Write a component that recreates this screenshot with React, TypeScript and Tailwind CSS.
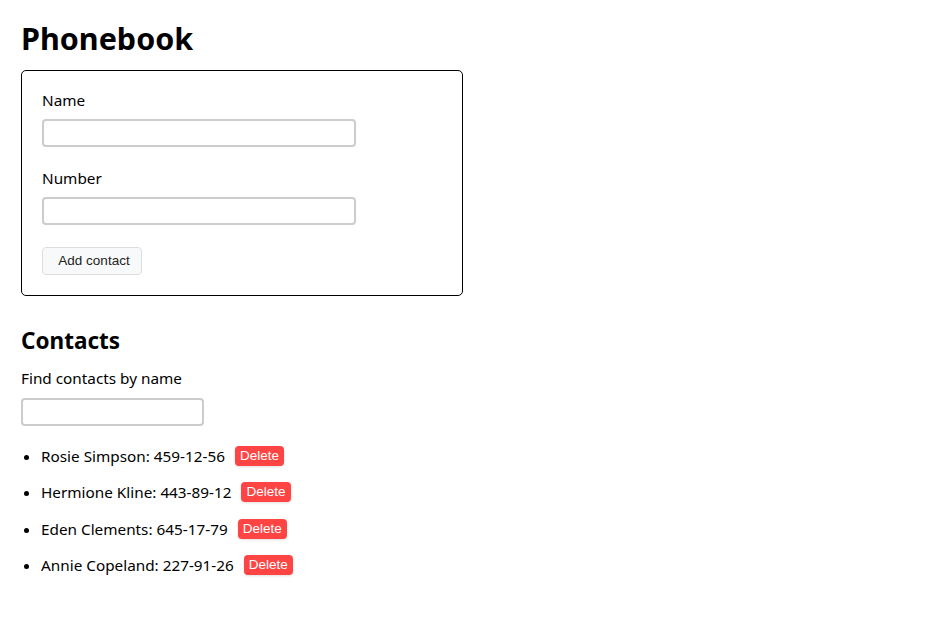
import React, { useState } from "react";

type Contact = { id: string; name: string; number: string };

const initialContacts: Contact[] = [
  { id: "id-1", name: "Rosie Simpson", number: "459-12-56" },
  { id: "id-2", name: "Hermione Kline", number: "443-89-12" },
  { id: "id-3", name: "Eden Clements", number: "645-17-79" },
  { id: "id-4", name: "Annie Copeland", number: "227-91-26" },
];

function App() {
  const [contacts, setContacts] = useState<Contact[]>(initialContacts);
  const [name, setName] = useState("");
  const [number, setNumber] = useState("");
  const [filter, setFilter] = useState("");

  const handleSubmit = (e: React.FormEvent) => {
    e.preventDefault();
    if (!name.trim()) return;
    setContacts((prev) => [...prev, { id: `id-${Date.now()}`, name, number }]);
    setName("");
    setNumber("");
  };

  const visible = contacts.filter((c) =>
    c.name.toLowerCase().includes(filter.toLowerCase())
  );

  return (
    <div className="min-h-screen bg-white px-[21px] pt-[18px] text-black font-['Segoe_UI','Noto_Sans',sans-serif] text-[15.3px]">
      <h1 className="text-[30.5px] font-bold leading-[40px] mb-[12px]">Phonebook</h1>

      {/* form */}
      <form
        onSubmit={handleSubmit}
        className="w-[442px] h-[226px] border border-black rounded-[5px] px-[20px] pt-[18px]"
      >
        <label className="block">
          <span className="block leading-[22px] mb-[8px]">Name</span>
          <input
            value={name}
            onChange={(e) => setName(e.target.value)}
            className="block w-[314px] h-[28px] border-2 border-[#cccccc] rounded-[4px] px-2 outline-none"
          />
        </label>
        <label className="block mt-[20px]">
          <span className="block leading-[22px] mb-[8px]">Number</span>
          <input
            value={number}
            onChange={(e) => setNumber(e.target.value)}
            className="block w-[314px] h-[28px] border-2 border-[#cccccc] rounded-[4px] px-2 outline-none"
          />
        </label>
        <button
          type="submit"
          className="mt-[22px] h-[28px] w-[100px] pl-[4px] border border-[#dddddd] rounded-[4px] bg-[#f8f9fa] text-[13.5px] text-[#222] font-['Liberation_Sans',Arial,sans-serif]"
        >
          Add contact
        </button>
      </form>

      {/* contacts */}
      <h2 className="mt-[29px] text-[22.5px] font-bold leading-[32px]">Contacts</h2>
      <p className="mt-[10px] leading-[22px]">Find contacts by name</p>
      <input
        value={filter}
        onChange={(e) => setFilter(e.target.value)}
        className="block mt-[9px] w-[183px] h-[28px] border-2 border-[#cccccc] rounded-[4px] px-2 outline-none"
      />

      <ul className="mt-[19px] list-disc pl-[20px] flex flex-col gap-[14.3px]">
        {visible.map((c) => (
          <li key={c.id} className="leading-[22px]">
            <span className="inline-flex items-center">
              {c.name}: {c.number}
              <button
                onClick={() => setContacts((prev) => prev.filter((p) => p.id !== c.id))}
                className="ml-[10px] h-[20px] px-[5px] rounded-[4px] bg-[#ff4444] text-white text-[13.5px] leading-[20px] shadow-sm font-['Liberation_Sans',Arial,sans-serif]"
              >
                Delete
              </button>
            </span>
          </li>
        ))}
      </ul>
    </div>
  );
}

export default App;
